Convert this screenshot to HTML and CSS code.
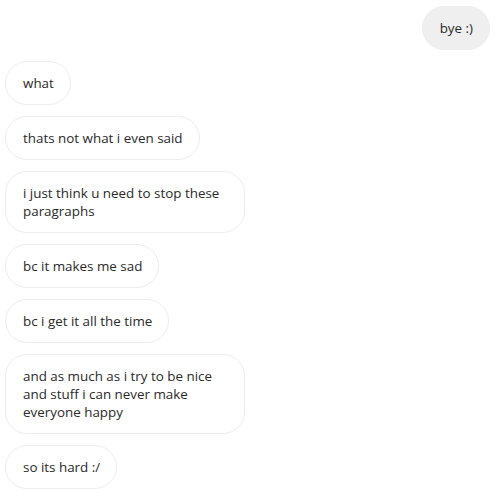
FILE: index.html
```html
<!DOCTYPE html>
<html>
<head>
<meta charset="utf-8">
<link rel="stylesheet" href="styles.css">
</head>
<body>
<div class="chat">
  <div class="msg sent">bye :)</div>
  <div class="msg recv">what</div>
  <div class="msg recv">thats not what i even said</div>
  <div class="msg recv">i just think u need to stop these paragraphs</div>
  <div class="msg recv">bc it makes me sad</div>
  <div class="msg recv">bc i get it all the time</div>
  <div class="msg recv">and as much as i try to be nice and stuff i can never make everyone happy</div>
  <div class="msg recv">so its hard :/</div>
</div>
</body>
</html>
```
FILE: styles.css
```css
html, body {
  margin: 0;
  padding: 0;
  background: #ffffff;
}
body {
  font-family: "Open Sans", "Noto Sans", sans-serif;
  font-size: 13.4px;
  color: #2a2a2a;
}
.chat {
  display: flex;
  flex-direction: column;
  gap: 11px;
  padding: 6px 10px 0 5px;
}
.msg {
  box-sizing: border-box;
  max-width: 240px;
  padding: 12px 16px 12px 17px;
  line-height: 18px;
  border-radius: 22px;
}
.sent {
  align-self: flex-end;
  background: #efefef;
  border: 1px solid #efefef;
}
.recv {
  align-self: flex-start;
  background: #ffffff;
  border: 1px solid #ededed;
}
```
